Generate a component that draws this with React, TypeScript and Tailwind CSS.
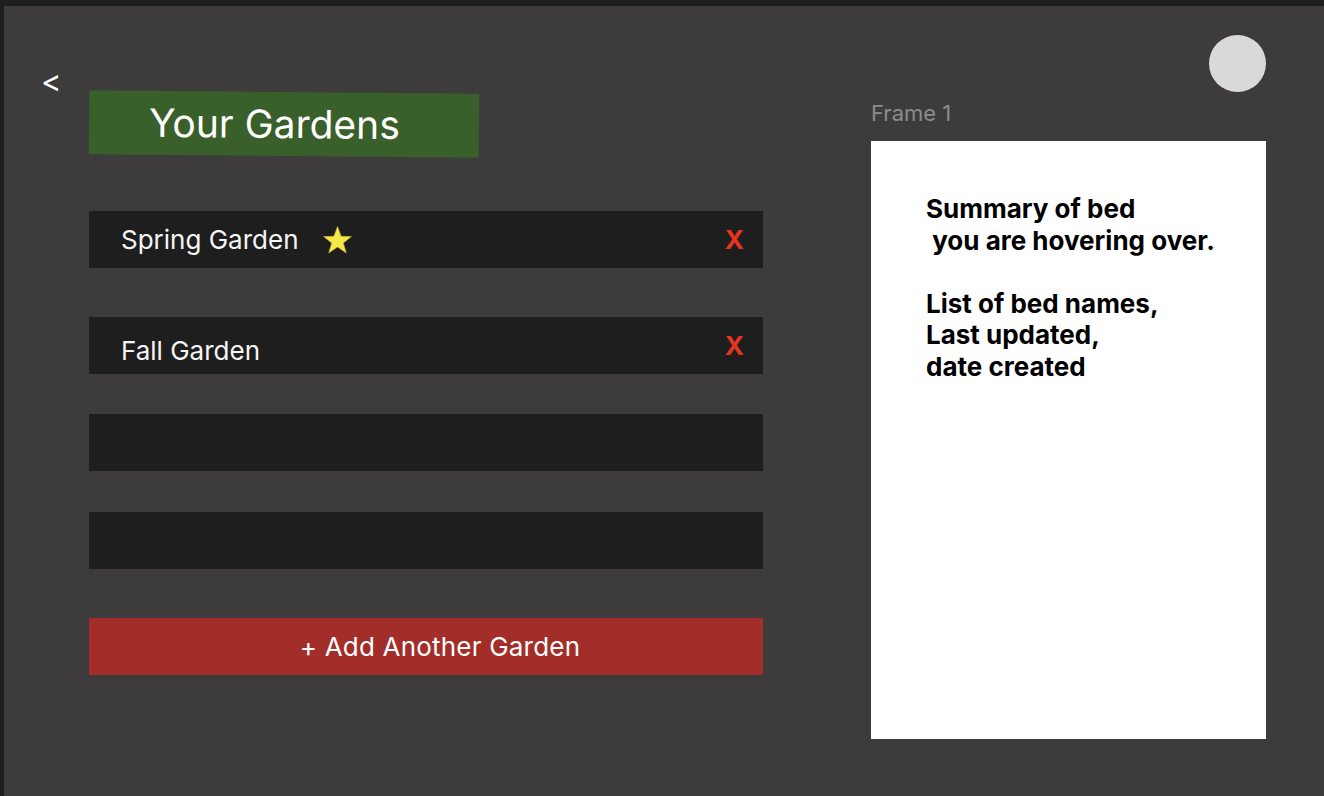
const GARDENS = [
  { name: 'Spring Garden', fav: true, top: 'mt-[55px]', nudge: '' },
  { name: 'Fall Garden', fav: false, top: 'mt-[49px]', nudge: 'pt-[9px]' },
]

function Star() {
  return (
    <svg width="31" height="30" viewBox="0 0 24 23" className="ml-[23px]">
      <polygon points="12,1 14.8,8.6 22.8,8.8 16.5,13.8 18.8,21.6 12,17 5.2,21.6 7.5,13.8 1.2,8.8 9.2,8.6"
        fill="#f4e84a" stroke="#c8bc2c" strokeWidth="0.4" />
    </svg>
  )
}

export default function App() {
  return (
    <div className="flex h-[796px] w-full overflow-hidden border-t-[6px] border-l-[4px] border-[#1e1e1e] bg-[#3d3b3c] font-['Inter',sans-serif]">

      {/* Back */}
      <div className="w-[85px] shrink-0">
        <div className="ml-[37px] mt-[59px] text-[31px] leading-none text-white">&lt;</div>
      </div>

      {/* Garden list */}
      <div className="flex w-[674px] shrink-0 flex-col">
        <div className="mt-[86px] flex h-[64px] w-[390px] rotate-[0.5deg] items-center bg-[#395f2a] pl-[60px]">
          <span className="text-[39px] text-white">Your Gardens</span>
        </div>

        {GARDENS.map(g => (
          <div key={g.name} className={`${g.top} flex h-[57px] items-center bg-[#1e1e1e] pl-[32px] pr-[19px]`}>
            <span className={`${g.nudge} text-[26px] text-[#f5f5f5]`}>{g.name}</span>
            {g.fav && <Star />}
            <span className="ml-auto text-[26px] font-bold text-[#e8341f]">X</span>
          </div>
        ))}

        <div className="mt-[40px] h-[57px] bg-[#1e1e1e]" />
        <div className="mt-[41px] h-[57px] bg-[#1e1e1e]" />

        <div className="mt-[49px] flex h-[57px] items-center justify-center bg-[#a32d29] pl-[28px]">
          <span className="text-[26px] tracking-[0.2px] text-white">+ Add Another Garden</span>
        </div>
      </div>

      {/* Summary */}
      <div className="ml-[108px] flex w-[395px] shrink-0 flex-col">
        <div className="mt-[29px] h-[57px] w-[57px] self-end rounded-full bg-[#d9d9d9]" />
        <div className="mt-[8px] text-[22px] leading-[26px] text-[#8c8c8c]">Frame 1</div>
        <div className="mt-[15px] h-[598px] bg-white pl-[55px] pt-[52px]">
          <p className="whitespace-pre text-[26px] font-bold leading-[31.5px] text-black">
            {'Summary of bed\n you are hovering over.\n\nList of bed names,\nLast updated,\ndate created'}
          </p>
        </div>
      </div>
    </div>
  )
}
